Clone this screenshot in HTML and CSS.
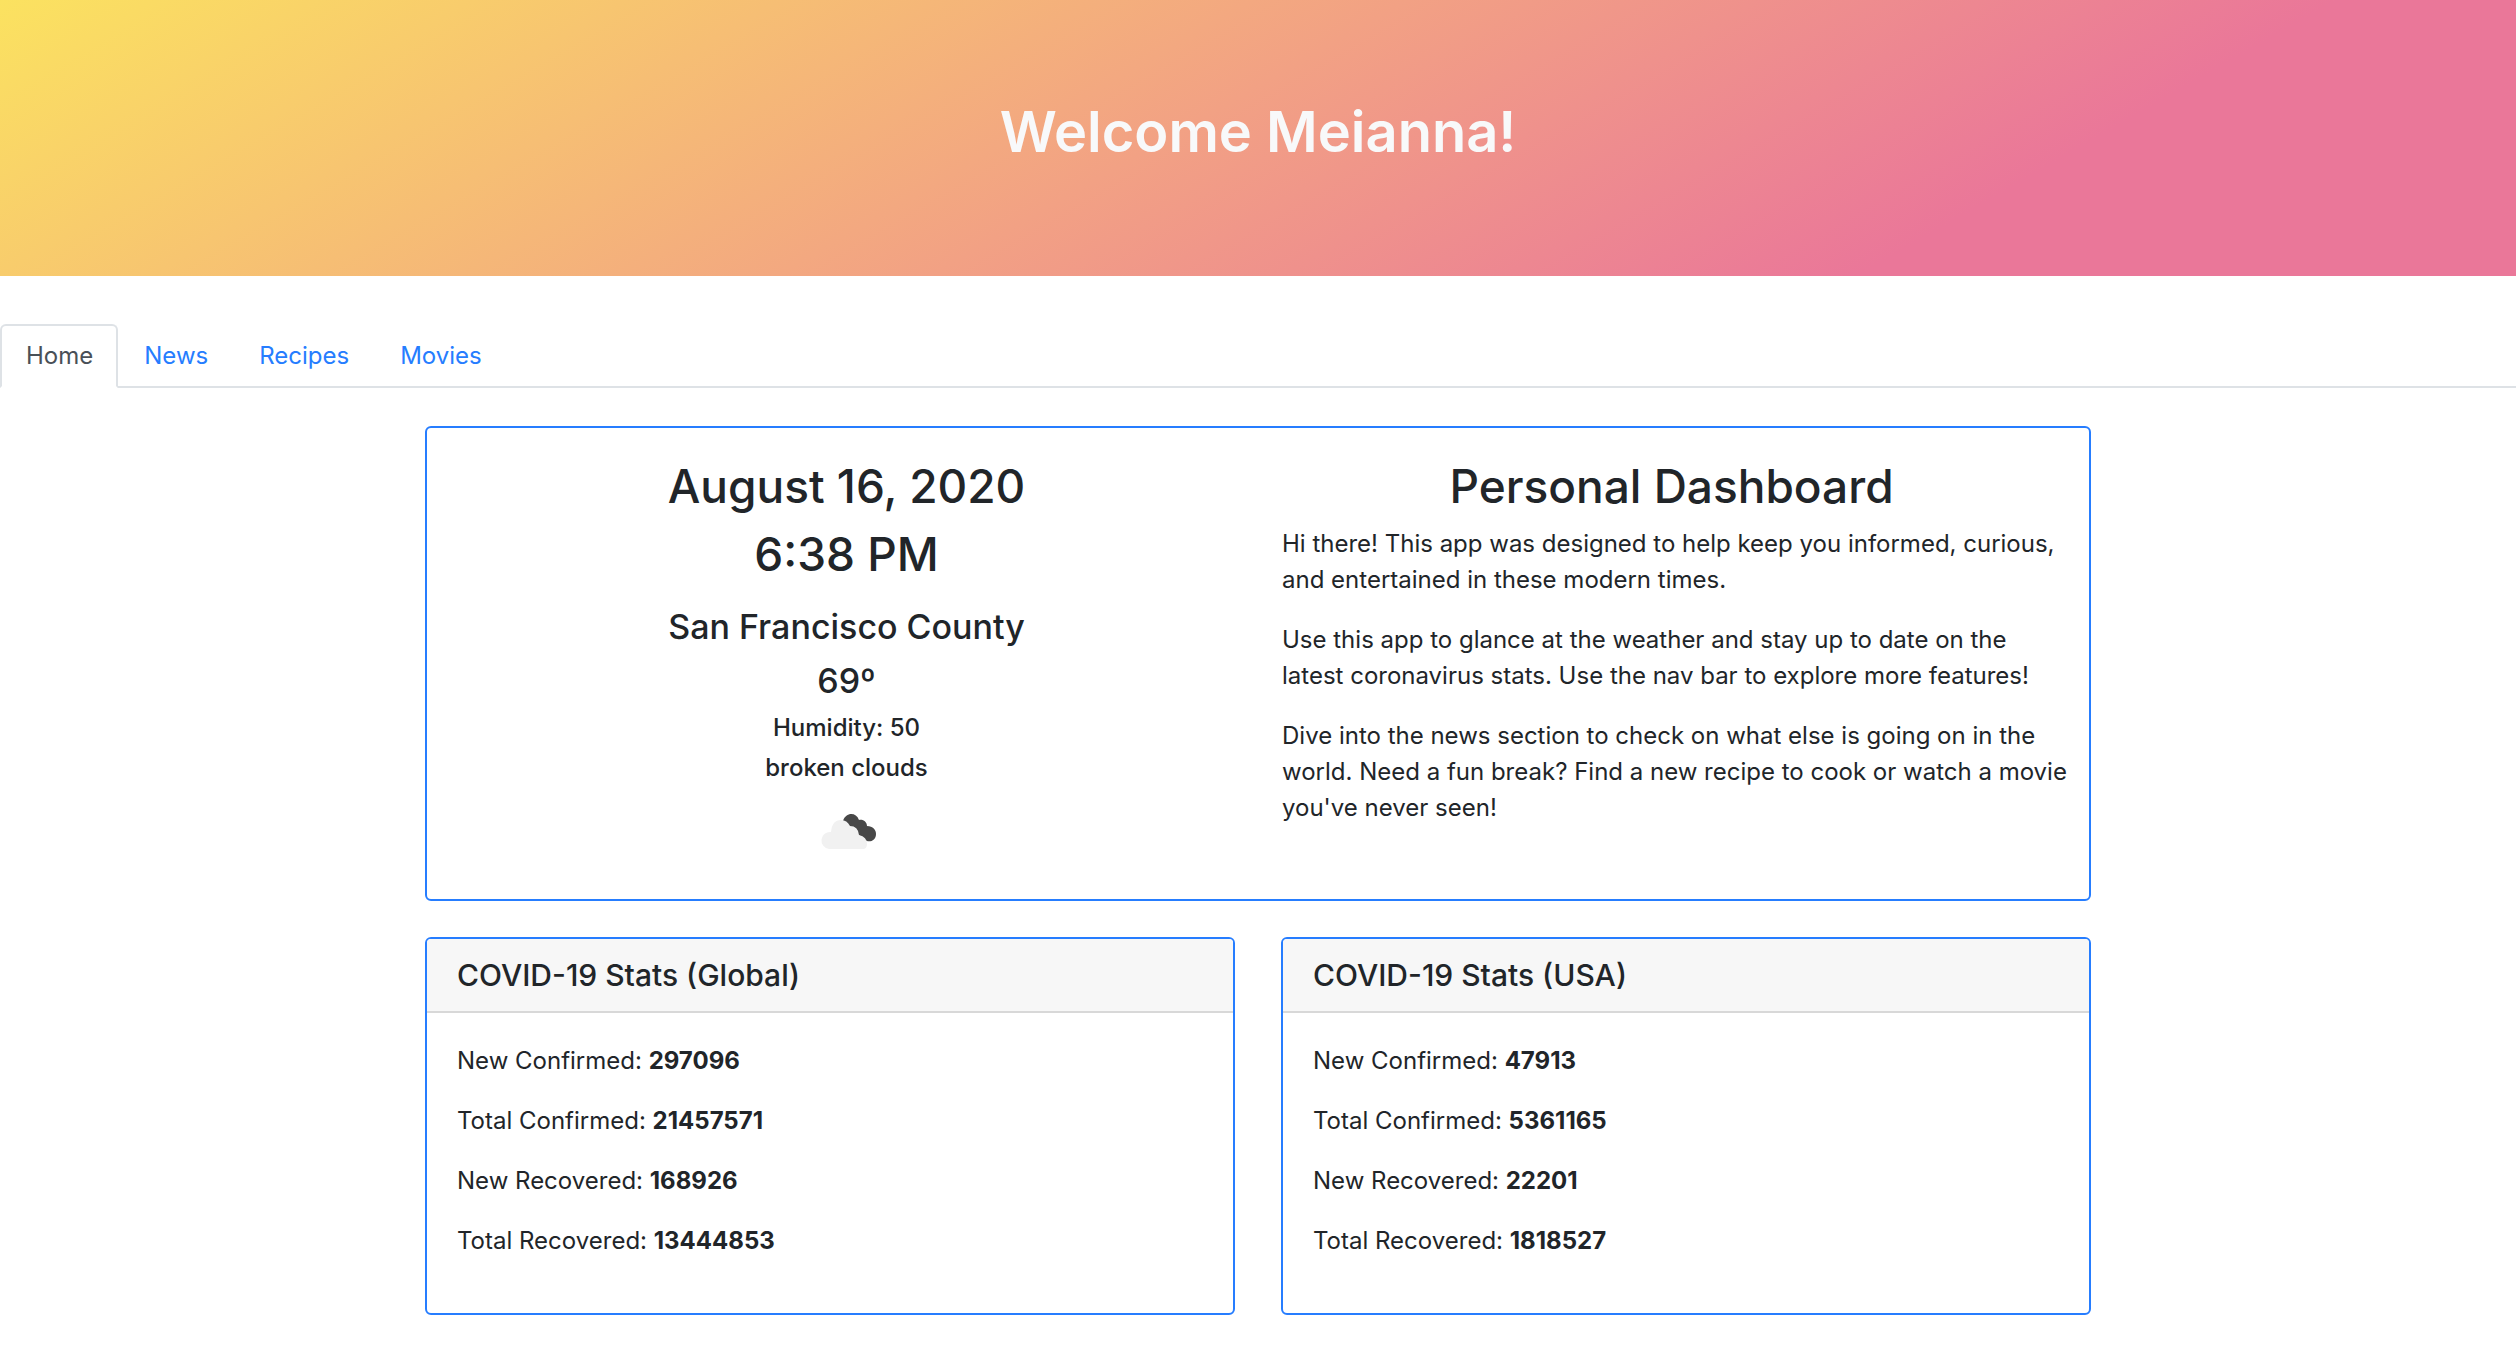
FILE: index.html
```html
<!DOCTYPE html>
<html lang="en">
<head>
<meta charset="utf-8">
<meta name="viewport" content="width=device-width, initial-scale=1">
<title>Personal Dashboard</title>
<link rel="stylesheet" href="styles.css">
</head>
<body>
<header class="hero">
  <h1 class="hero-title">Welcome Meianna!</h1>
</header>
<nav class="tabs" aria-label="Main">
  <a class="tab active" href="#home" aria-current="page">Home</a>
  <a class="tab" href="#news">News</a>
  <a class="tab" href="#recipes">Recipes</a>
  <a class="tab" href="#movies">Movies</a>
</nav>
<main class="container">
  <section class="card intro">
    <div class="weather">
      <h2 class="title">August 16, 2020</h2>
      <h2 class="title">6:38 PM</h2>
      <h3 class="place">San Francisco County</h3>
      <h3 class="temperature">69º</h3>
      <h6 class="detail">Humidity: 50</h6>
      <h6 class="detail">broken clouds</h6>
      <svg class="weather-icon" viewBox="0 0 75 75" role="img" aria-label="Broken clouds">
        <path fill="#484848" d="M34 27C37 18 47 18 50 26C54 25 58 28 58 32C64 32 67 36 67 40C67 47 60 49 56 46L51 42L43 36Z"/>
        <path fill="#f1f1f1" d="M20 55A8 8 0 0 1 22 38Q23 26 32 26Q38 26 41 32Q49 32 50 41Q58 43 58 50Q58 55 54 55Z"/>
      </svg>
    </div>
    <div class="about">
      <h2 class="title">Personal Dashboard</h2>
      <p>Hi there! This app was designed to help keep you informed, curious, and entertained in these modern times.</p>
      <p>Use this app to glance at the weather and stay up to date on the latest coronavirus stats. Use the nav bar to explore more features!</p>
      <p>Dive into the news section to check on what else is going on in the world. Need a fun break? Find a new recipe to cook or watch a movie you've never seen!</p>
    </div>
  </section>
  <div class="stats">
    <section class="card">
      <h5 class="card-header">COVID-19 Stats (Global)</h5>
      <div class="card-body">
        <p>New Confirmed: <strong>297096</strong></p>
        <p>Total Confirmed: <strong>21457571</strong></p>
        <p>New Recovered: <strong>168926</strong></p>
        <p>Total Recovered: <strong>13444853</strong></p>
      </div>
    </section>
    <section class="card">
      <h5 class="card-header">COVID-19 Stats (USA)</h5>
      <div class="card-body">
        <p>New Confirmed: <strong>47913</strong></p>
        <p>Total Confirmed: <strong>5361165</strong></p>
        <p>New Recovered: <strong>22201</strong></p>
        <p>Total Recovered: <strong>1818527</strong></p>
      </div>
    </section>
  </div>
</main>
</body>
</html>
```
FILE: styles.css
```css
* { box-sizing: border-box; }

body {
  margin: 0;
  background: #fff;
  color: #212529;
  font-family: Inter, "Liberation Sans", sans-serif;
  font-size: 24px;
  line-height: 36px;
}

h1, h2, h3, h5, h6 { margin: 0; font-weight: 500; }
p { margin: 0 0 24px; }

.hero {
  padding: 96px 24px 108px;
  background: linear-gradient(150deg, #fbe260 0%, #f2a184 47%, #ea7799 78%);
  text-align: center;
}
.hero-title {
  color: #f8f9fa;
  font-size: 56px;
  font-weight: 600;
  line-height: 72px;
}

.tabs {
  display: flex;
  margin-top: 48px;
  border-bottom: 2px solid #dee2e6;
}
.tab {
  margin-bottom: -2px;
  padding: 12px 23px 12px 24px;
  border: 2px solid transparent;
  border-radius: 6px 6px 0 0;
  color: #267dff;
  text-decoration: none;
}
.tab.active {
  background: #fff;
  border-color: #dee2e6 #dee2e6 #fff;
  color: #495057;
}

.container {
  max-width: 1666px;
  margin: 38px auto 46px;
}
.card {
  border: 2px solid #267dff;
  border-radius: 6px;
  overflow: hidden;
}
.intro {
  display: grid;
  grid-template-columns: 1fr 1fr;
  gap: 46px;
  padding: 30px 28px 30px 30px;
}
.title {
  margin-bottom: 12px;
  font-size: 46px;
  line-height: 56px;
  text-align: center;
}
.weather { text-align: center; }
.place, .temperature {
  margin-bottom: 12px;
  font-size: 34px;
  line-height: 42px;
}
.place { margin-top: 24px; }
.detail {
  margin-bottom: 12px;
  font-size: 24px;
  line-height: 28px;
}
/* Lets the body copy run slightly into the card's right padding. */
.about p { margin-right: -12px; }
.weather-icon {
  display: block;
  width: 75px;
  height: 75px;
  margin: 0 auto;
}
.stats {
  display: grid;
  grid-template-columns: 1fr 1fr;
  gap: 46px;
  margin-top: 36px;
}
.card-header {
  padding: 18px 30px;
  background: #f7f7f7;
  border-bottom: 2px solid #d8d8d8;
  font-size: 30px;
  line-height: 36px;
}
.card-body { padding: 30px; }
```
